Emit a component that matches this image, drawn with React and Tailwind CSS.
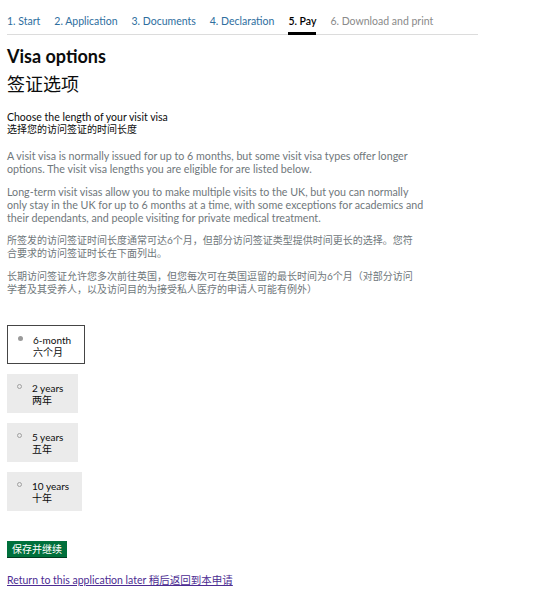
import React from "react";

const steps = [
  { label: "1. Start", state: "done" },
  { label: "2. Application", state: "done" },
  { label: "3. Documents", state: "done" },
  { label: "4. Declaration", state: "done" },
  { label: "5. Pay", state: "current" },
  { label: "6. Download and print", state: "todo" },
];

const options = [
  { en: "6-month", zh: "六个月", selected: true, w: "w-[78px]" },
  { en: "2 years", zh: "两年", w: "w-[71px]" },
  { en: "5 years", zh: "五年", w: "w-[71px]" },
  { en: "10 years", zh: "十年", w: "w-[75px]" },
];

const font = { fontFamily: "Lato, 'Noto Sans CJK SC', sans-serif" };

function App() {
  return (
    <div className="min-h-[611px] bg-white px-[7px] pt-[15px] text-[#0b0c0c]" style={font}>
      {/* Steps */}
      <div className="w-[471px] border-b border-[#dcdcdc] flex gap-[14px] text-[10.5px] leading-[13px]">
        {steps.map((s) => (
          <div
            key={s.label}
            className={
              s.state === "current"
                ? "pb-[4px] border-b-[3px] border-black text-black font-semibold -mb-[1px]"
                : s.state === "done"
                ? "pb-[6px] text-[#2e6e9e]"
                : "pb-[6px] text-[#8a8a8a]"
            }
          >
            {s.label}
          </div>
        ))}
      </div>

      <h1 className="mt-[10px] text-[18px] leading-[22px] font-bold">Visa options</h1>
      <h2 className="mt-[6px] text-[18px] leading-[22px]">签证选项</h2>

      <div className="mt-[16px] text-[10.5px] leading-[12px]">
        <p>Choose the length of your visit visa</p>
        <p className="text-[10px]">选择您的访问签证的时间长度</p>
      </div>

      <div className="mt-[14px] w-[423px] text-[10.7px] leading-[13px] text-[#6f777b] flex flex-col gap-[10px]">
        <p>
          A visit visa is normally issued for up to 6 months, but some visit visa types offer longer
          options. The visit visa lengths you are eligible for are listed below.
        </p>
        <p>
          Long-term visit visas allow you to make multiple visits to the UK, but you can normally
          only stay in the UK for up to 6 months at a time, with some exceptions for academics and
          their dependants, and people visiting for private medical treatment.
        </p>
        <p className="w-[415px] text-[10px]">
          所签发的访问签证时间长度通常可达6个月，但部分访问签证类型提供时间更长的选择。您符合要求的访问签证时长在下面列出。
        </p>
        <p className="w-[415px] text-[10px]">
          长期访问签证允许您多次前往英国，但您每次可在英国逗留的最长时间为6个月（对部分访问学者及其受养人，以及访问目的为接受私人医疗的申请人可能有例外）
        </p>
      </div>

      <div className="mt-[29px] flex flex-col gap-[10px]">
        {options.map((o) => (
          <div
            key={o.en}
            className={
              "h-[39px] flex items-start pt-[8px] " +
              o.w +
              (o.selected ? " border border-[#454545] bg-white" : " bg-[#ebebeb]")
            }
          >
            <span
              className={
                "ml-[10px] mt-[2px] w-[5px] h-[5px] rounded-full " +
                (o.selected ? "bg-[#9a9a9a]" : "border border-[#a0a0a0]")
              }
            />
            <div className="ml-[10px] text-[10px] leading-[12px]">
              <div>{o.en}</div>
              <div>{o.zh}</div>
            </div>
          </div>
        ))}
      </div>

      <button className="mt-[30px] block bg-[#00703c] text-white text-[10px] leading-[16px] px-[5px] border-b border-[#003a1f]">
        保存并继续
      </button>

      <a href="#" className="mt-[16px] inline-block text-[10.5px] leading-[12px] text-[#4c2c92] underline">
        Return to this application later 稍后返回到本申请
      </a>
    </div>
  );
}

export default App;
